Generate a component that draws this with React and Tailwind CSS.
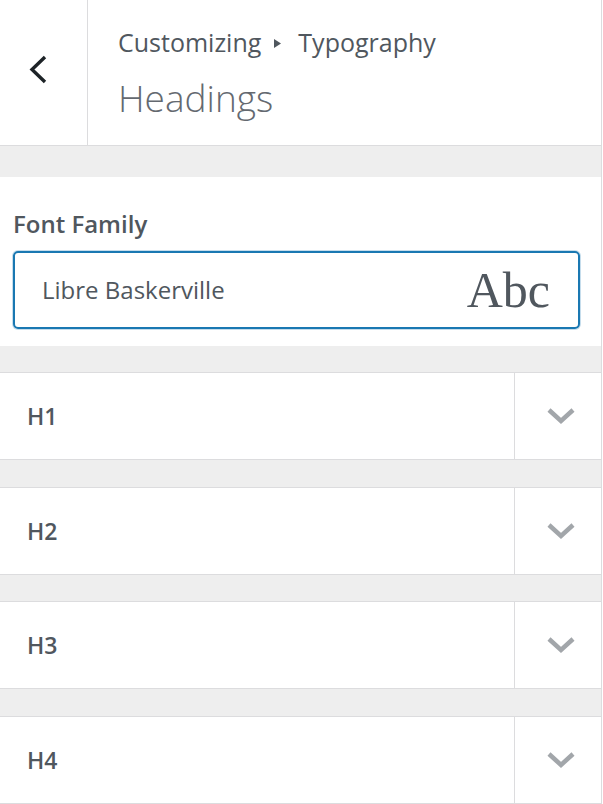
import React from "react";

const sans = { fontFamily: '"Open Sans", "Noto Sans", sans-serif' };

function ChevronDown() {
  return (
    <svg width="30" height="20" viewBox="0 0 30 20" className="block">
      <polyline points="3,4 15,15 27,4" fill="none" stroke="#a2a6aa" strokeWidth="4.5" strokeLinejoin="miter" />
    </svg>
  );
}

function HeadingRow({ label }) {
  return (
    <div className="flex h-[88px] bg-white border-y border-[#dcdcde]">
      <div className="flex-1 flex items-center pl-[27px] text-[23px] font-semibold text-[#50575e]">{label}</div>
      <div className="w-[87px] border-l border-[#dcdcde] flex items-center justify-center pl-[5px]">
        <ChevronDown />
      </div>
    </div>
  );
}

export default function App() {
  return (
    <div className="w-[603px] h-[804px] bg-white overflow-hidden" style={sans}>
      <div className="w-[602px] h-[804px] bg-[#eeeeee] border-r border-[#dcdcde] flex flex-col">
        {/* header */}
        <div className="flex h-[146px] shrink-0 bg-white border-b border-[#dcdcde]">
          <div className="w-[88px] border-r border-[#dcdcde] pl-[28px] pt-[55px]">
            <svg width="22" height="30" viewBox="0 0 22 30" className="block">
              <polyline points="17,2 4,14.5 17,27" fill="none" stroke="#1d2327" strokeWidth="3.4" />
            </svg>
          </div>
          <div className="pl-[30px] pt-[27px]">
            <div className="flex items-center text-[25px] leading-[30px] text-[#50575e]">
              <span>Customizing</span>
              <svg width="8" height="9" viewBox="0 0 8 9" className="block ml-[13px] mr-[16px] mt-[2px]">
                <polygon points="0,0 7,4.5 0,9" fill="#50575e" />
              </svg>
              <span>Typography</span>
            </div>
            <div className="mt-[19px] text-[37px] leading-[44px] text-[#646970] font-light">Headings</div>
          </div>
        </div>

        <div className="h-[31px] shrink-0"></div>

        {/* font family */}
        <div className="bg-white h-[169px] shrink-0 pt-[33px] pl-[13px]">
          <div className="text-[24px] leading-[28px] font-semibold text-[#50575e]">Font Family</div>
          <div className="mt-[13px] w-[567px] h-[78px] border-2 border-[#1a78b2] rounded-[5px] shadow-[0_0_0_1px_rgba(26,120,178,0.25)] flex items-center justify-between pl-[27px] pr-[28px]">
            <span className="text-[24px] text-[#50575e]">Libre Baskerville</span>
            <span className="text-[50px] leading-none text-[#50575e]" style={{ fontFamily: '"Liberation Serif", "DejaVu Serif", serif' }}>Abc</span>
          </div>
        </div>

        <div className="h-[26px] shrink-0"></div>
        <HeadingRow label="H1" />
        <div className="h-[27px] shrink-0"></div>
        <HeadingRow label="H2" />
        <div className="h-[26px] shrink-0"></div>
        <HeadingRow label="H3" />
        <div className="h-[27px] shrink-0"></div>
        <HeadingRow label="H4" />
      </div>
    </div>
  );
}
